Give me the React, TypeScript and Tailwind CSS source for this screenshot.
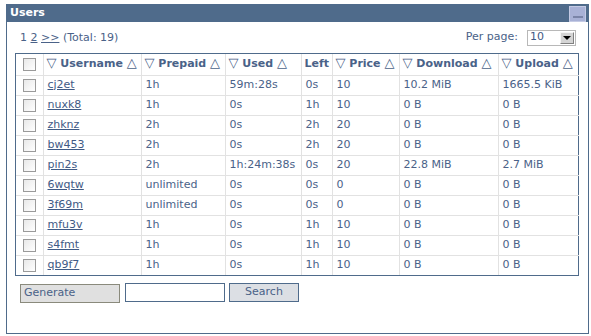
import React from 'react';

const rows = [
  { name: 'cj2et', prepaid: '1h', used: '59m:28s', left: '0s', price: '10', down: '10.2 MiB', up: '1665.5 KiB' },
  { name: 'nuxk8', prepaid: '1h', used: '0s', left: '1h', price: '10', down: '0 B', up: '0 B' },
  { name: 'zhknz', prepaid: '2h', used: '0s', left: '2h', price: '20', down: '0 B', up: '0 B' },
  { name: 'bw453', prepaid: '2h', used: '0s', left: '2h', price: '20', down: '0 B', up: '0 B' },
  { name: 'pin2s', prepaid: '2h', used: '1h:24m:38s', left: '0s', price: '20', down: '22.8 MiB', up: '2.7 MiB' },
  { name: '6wqtw', prepaid: 'unlimited', used: '0s', left: '0s', price: '0', down: '0 B', up: '0 B' },
  { name: '3f69m', prepaid: 'unlimited', used: '0s', left: '0s', price: '0', down: '0 B', up: '0 B' },
  { name: 'mfu3v', prepaid: '1h', used: '0s', left: '1h', price: '10', down: '0 B', up: '0 B' },
  { name: 's4fmt', prepaid: '1h', used: '0s', left: '1h', price: '10', down: '0 B', up: '0 B' },
  { name: 'qb9f7', prepaid: '1h', used: '0s', left: '1h', price: '10', down: '0 B', up: '0 B' },
];

function Box() {
  return <div className="w-[13px] h-[13px] border border-[#9a9a9a] bg-gradient-to-br from-[#e8e8e8] to-white mx-auto" />;
}

function Sortable({ label }: { label: string }) {
  return (
    <span className="whitespace-nowrap">
      <span className="text-[13px] leading-[0] font-normal">▽</span> {label} <span className="text-[13px] leading-[0] font-normal">△</span>
    </span>
  );
}

export default function App() {
  const td = 'border border-[#e2e2e2] px-[4px] h-[20px] whitespace-nowrap';
  const th = 'border border-[#e2e2e2] px-[3px] h-[21px] leading-[14px] text-left font-bold whitespace-nowrap';
  return (
    <div className="w-[591px] h-[336px] bg-white pt-[4px] pl-[6px] font-['DejaVu_Sans',sans-serif] text-[11px] text-[#4a6288]">
      <div className="w-[583px] h-[330px] border border-[#4f6b8b] border-t-0">
        {/* Title bar */}
        <div className="h-[18px] bg-[#4f6b8b] flex items-center justify-between pl-[3px] pr-[2px]">
          <span className="text-white font-bold text-[11px]">Users</span>
          <div className="w-[17px] h-[16px] bg-[#a8b1d6] border border-[#c4cae4] flex items-end justify-center pb-[3px] mt-[1px]">
            <div className="w-[10px] h-[2px] bg-[#7a84a8]" />
          </div>
        </div>

        <div className="pl-[8px] pr-[9px]">
          {/* Pager */}
          <div className="flex items-center justify-between h-[31px] pl-[5px]">
            <div className="pt-[2px]">
              1 <a className="underline">2</a> <a className="underline">&gt;&gt;</a> (Total: 19)
            </div>
            <div className="flex items-center gap-[9px] pr-[3px]">
              <span>Per page:</span>
              <div className="w-[49px] h-[16px] border border-[#b8b8b8] bg-white flex items-center justify-between">
                <span className="pl-[2px] text-[#3f5a85]">10</span>
                <div className="w-[14px] h-[12px] mr-[1px] bg-[#d4d4d4] border border-[#f4f4f4] border-r-[#808080] border-b-[#808080] flex items-center justify-center">
                  <div className="w-0 h-0 border-l-[4px] border-r-[4px] border-t-[4px] border-l-transparent border-r-transparent border-t-black" />
                </div>
              </div>
            </div>
          </div>

          {/* Table */}
          <div className="border border-[#4f6b8b]">
            <table className="table-fixed border-collapse w-[563px] border-hidden">
              <colgroup>
                <col className="w-[27px]" />
                <col className="w-[98px]" />
                <col className="w-[84px]" />
                <col className="w-[76px]" />
                <col className="w-[31px]" />
                <col className="w-[67px]" />
                <col className="w-[99px]" />
                <col className="w-[81px]" />
              </colgroup>
              <thead>
                <tr>
                  <th className={th}><Box /></th>
                  <th className={th}><Sortable label="Username" /></th>
                  <th className={th}><Sortable label="Prepaid" /></th>
                  <th className={th}><Sortable label="Used" /></th>
                  <th className={th}>Left</th>
                  <th className={th}><Sortable label="Price" /></th>
                  <th className={th}><Sortable label="Download" /></th>
                  <th className={th}><Sortable label="Upload" /></th>
                </tr>
              </thead>
              <tbody>
                {rows.map(r => (
                  <tr key={r.name}>
                    <td className={td}><Box /></td>
                    <td className={td}><a className="underline text-[#3f5a85]">{r.name}</a></td>
                    <td className={td}>{r.prepaid}</td>
                    <td className={td}>{r.used}</td>
                    <td className={td}>{r.left}</td>
                    <td className={td}>{r.price}</td>
                    <td className={td}>{r.down}</td>
                    <td className={td}>{r.up}</td>
                  </tr>
                ))}
              </tbody>
            </table>
          </div>

          {/* Actions */}
          <div className="flex items-start gap-[5px] pl-[5px] pt-[7px]">
            <button className="w-[100px] h-[19px] mt-[1px] bg-[#e0e0e0] border border-[#8a8a7c] text-left pl-[3px] text-[11px] text-[#4a6288]">Generate</button>
            <input className="w-[100px] h-[19px] border border-[#4f6b8b] bg-white outline-none" />
            <button className="w-[70px] h-[19px] ml-[-1px] bg-[#dcdfe4] border border-[#4f6b8b] text-center text-[11px] text-[#4a6288]">Search</button>
          </div>
        </div>
      </div>
    </div>
  );
}
